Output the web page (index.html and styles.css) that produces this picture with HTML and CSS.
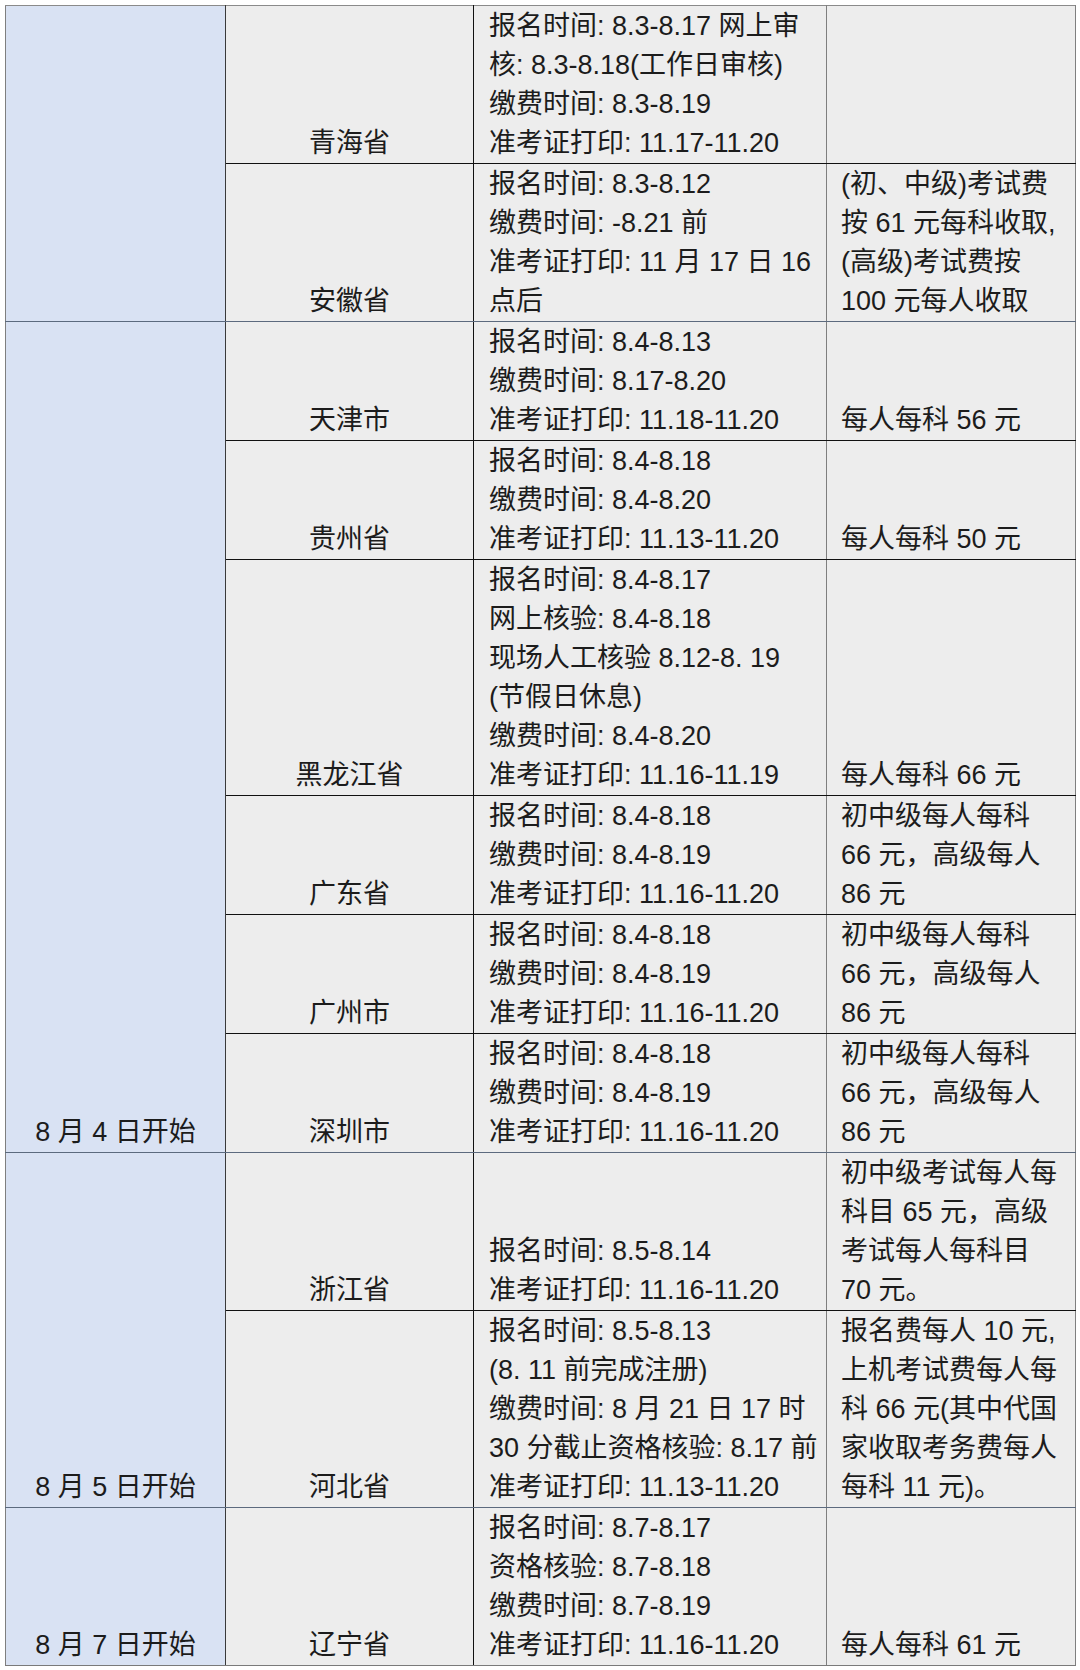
FILE: index.html
```html
<!DOCTYPE html>
<html lang="zh-CN">
<head>
<meta charset="utf-8">
<title>考试时间表</title>
<link rel="stylesheet" href="styles.css">
</head>
<body>
<div class="wrap">
<table class="t">
<colgroup><col class="c1"><col class="c2"><col class="c3"><col class="c4"></colgroup>
<tbody>
<tr class="first">
  <td class="date" rowspan="2"></td>
  <td class="prov">青海省</td>
  <td class="time">报名时间: 8.3-8.17 网上审<br>核: 8.3-8.18(工作日审核)<br>缴费时间: 8.3-8.19<br>准考证打印: 11.17-11.20</td>
  <td class="fee"></td>
</tr>
<tr class="gend">
  <td class="prov">安徽省</td>
  <td class="time">报名时间: 8.3-8.12<br>缴费时间: -8.21 前<br>准考证打印: 11 月 17 日 16<br>点后</td>
  <td class="fee">(初、中级)考试费<br>按 61 元每科收取,<br>(高级)考试费按<br>100 元每人收取</td>
</tr>
<tr>
  <td class="date" rowspan="6">8 月 4 日开始</td>
  <td class="prov">天津市</td>
  <td class="time">报名时间: 8.4-8.13<br>缴费时间: 8.17-8.20<br>准考证打印: 11.18-11.20</td>
  <td class="fee">每人每科 56 元</td>
</tr>
<tr>
  <td class="prov">贵州省</td>
  <td class="time">报名时间: 8.4-8.18<br>缴费时间: 8.4-8.20<br>准考证打印: 11.13-11.20</td>
  <td class="fee">每人每科 50 元</td>
</tr>
<tr>
  <td class="prov">黑龙江省</td>
  <td class="time">报名时间: 8.4-8.17<br>网上核验: 8.4-8.18<br>现场人工核验 8.12-8. 19<br>(节假日休息)<br>缴费时间: 8.4-8.20<br>准考证打印: 11.16-11.19</td>
  <td class="fee">每人每科 66 元</td>
</tr>
<tr>
  <td class="prov">广东省</td>
  <td class="time">报名时间: 8.4-8.18<br>缴费时间: 8.4-8.19<br>准考证打印: 11.16-11.20</td>
  <td class="fee">初中级每人每科<br>66 元，高级每人<br>86 元</td>
</tr>
<tr>
  <td class="prov">广州市</td>
  <td class="time">报名时间: 8.4-8.18<br>缴费时间: 8.4-8.19<br>准考证打印: 11.16-11.20</td>
  <td class="fee">初中级每人每科<br>66 元，高级每人<br>86 元</td>
</tr>
<tr class="gend">
  <td class="prov">深圳市</td>
  <td class="time">报名时间: 8.4-8.18<br>缴费时间: 8.4-8.19<br>准考证打印: 11.16-11.20</td>
  <td class="fee">初中级每人每科<br>66 元，高级每人<br>86 元</td>
</tr>
<tr>
  <td class="date" rowspan="2">8 月 5 日开始</td>
  <td class="prov">浙江省</td>
  <td class="time">报名时间: 8.5-8.14<br>准考证打印: 11.16-11.20</td>
  <td class="fee">初中级考试每人每<br>科目 65 元，高级<br>考试每人每科目<br>70 元。</td>
</tr>
<tr class="gend">
  <td class="prov">河北省</td>
  <td class="time">报名时间: 8.5-8.13<br>(8. 11 前完成注册)<br>缴费时间: 8 月 21 日 17 时<br>30 分截止资格核验: 8.17 前<br>准考证打印: 11.13-11.20</td>
  <td class="fee">报名费每人 10 元,<br>上机考试费每人每<br>科 66 元(其中代国<br>家收取考务费每人<br>每科 11 元)。</td>
</tr>
<tr class="last">
  <td class="date">8 月 7 日开始</td>
  <td class="prov">辽宁省</td>
  <td class="time">报名时间: 8.7-8.17<br>资格核验: 8.7-8.18<br>缴费时间: 8.7-8.19<br>准考证打印: 11.16-11.20</td>
  <td class="fee">每人每科 61 元</td>
</tr>
</tbody>
</table>
</div>
</body>
</html>
```

FILE: styles.css
```css
html, body {
  margin: 0;
  padding: 0;
  background: #ffffff;
}

.wrap {
  padding: 5px 5px 0 5px;
}

.t {
  border-collapse: collapse;
  table-layout: fixed;
  width: 1070px;
  font-family: "Liberation Sans", "Noto Sans CJK SC", sans-serif;
  font-size: 27px;
  line-height: 39px;
  color: #1c1c1c;
}

.c1 { width: 220px; }
.c2 { width: 248px; }
.c3 { width: 353px; }
.c4 { width: 249px; }

.t td {
  vertical-align: bottom;
  padding: 1px 0 0 0;
  white-space: nowrap;
  background: #ededed;
  border: 1px solid #111111;
}

.t td.date {
  background: #d9e2f3;
  text-align: center;
  border-left: 1px solid #7f7f7f;
  border-right: 1px solid #3a3a3a;
  border-bottom: 1px solid #5c6a7e;
}

.t td.prov {
  text-align: center;
}

.t td.time {
  text-align: left;
  padding-left: 15px;
  border-right: 1px solid #7f7f7f;
}

.t td.fee {
  text-align: left;
  padding-left: 14px;
  border-left: 1px solid #7f7f7f;
  border-right: 1px solid #7f7f7f;
}

.t tr.first td {
  border-top: 1px solid #8a8a8a;
}

.t tr.gend td {
  border-bottom: 1px solid #5c6a7e;
}

.t tr.last td {
  border-bottom: 1px solid #7a7a7a;
}
```
